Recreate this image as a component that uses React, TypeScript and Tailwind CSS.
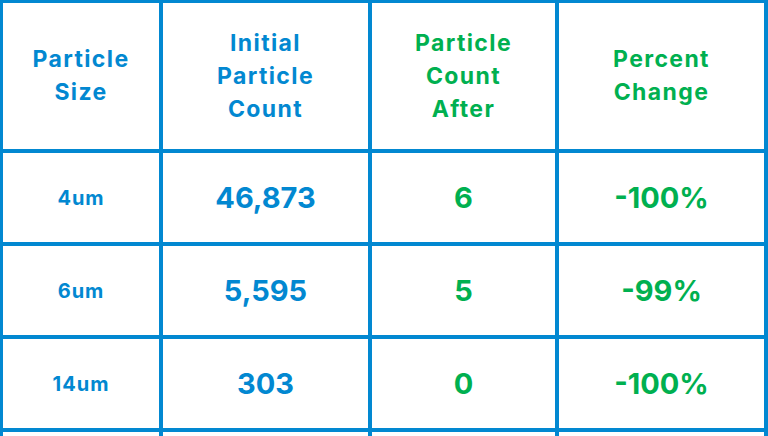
const rows = [
  { size: "4um", initial: "46,873", after: "6", change: "-100%" },
  { size: "6um", initial: "5,595", after: "5", change: "-99%" },
  { size: "14um", initial: "303", after: "0", change: "-100%" },
];

export default function App() {
  const blue = "text-[#0288d1]";
  const green = "text-[#00b050]";
  const cell = "flex items-center justify-center bg-white text-center";
  const head = "text-[23px] font-bold leading-[33px] tracking-[0.06em]";

  return (
    <div
      className="h-[436px] w-[768px] overflow-hidden bg-white"
      style={{ fontFamily: "Inter, 'Noto Sans', sans-serif" }}
    >
      <div className="grid grid-cols-[156px_205px_183px_205px] grid-rows-[146px_89px_89px_89px_89px] gap-[4px] bg-[#0288d1] pl-[3px] pr-[4px] pt-[3px]">
        {/* header */}
        <div className={`${cell} ${blue} ${head}`}>
          Particle<br />Size
        </div>
        <div className={`${cell} ${blue} ${head}`}>
          Initial<br />Particle<br />Count
        </div>
        <div className={`${cell} ${green} ${head}`}>
          Particle<br />Count<br />After
        </div>
        <div className={`${cell} ${green} ${head}`}>
          Percent<br />Change
        </div>

        {rows.map((r) => (
          <div key={r.size} className="contents">
            <div className={`${cell} ${blue} text-[20px] font-bold tracking-[0.05em]`}>{r.size}</div>
            <div className={`${cell} ${blue} text-[29px] font-bold`}>{r.initial}</div>
            <div className={`${cell} ${green} text-[29px] font-bold`}>{r.after}</div>
            <div className={`${cell} ${green} text-[29px] font-bold`}>{r.change}</div>
          </div>
        ))}

        {/* next row, cut off by the frame */}
        <div className={cell}></div>
        <div className={cell}></div>
        <div className={cell}></div>
        <div className={cell}></div>
      </div>
    </div>
  );
}
